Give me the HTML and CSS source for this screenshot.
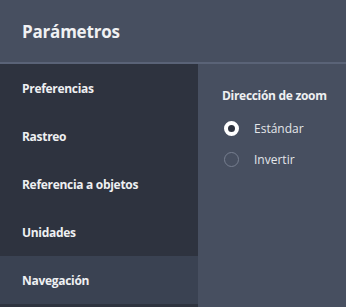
FILE: index.html
```html
<!DOCTYPE html>
<html lang="es">
<head>
<meta charset="utf-8">
<link rel="stylesheet" href="styles.css">
</head>
<body>
<div class="dialog">
  <header class="head"><h1 class="title">Parámetros</h1></header>
  <div class="main">
    <nav class="side">
      <div class="item">Preferencias</div>
      <div class="item">Rastreo</div>
      <div class="item">Referencia a objetos</div>
      <div class="item">Unidades</div>
      <div class="item active">Navegación</div>
    </nav>
    <section class="panel">
      <h2 class="label">Dirección de zoom</h2>
      <div class="opt"><span class="radio on"></span><span class="opt-text">Estándar</span></div>
      <div class="opt"><span class="radio"></span><span class="opt-text">Invertir</span></div>
    </section>
  </div>
</div>
</body>
</html>
```
FILE: styles.css
```css
html, body { margin: 0; padding: 0; }
body { background: #474f60; font-family: "Open Sans", "Noto Sans", sans-serif; color: #f2f2f2; }
.dialog { width: 346px; height: 307px; display: flex; flex-direction: column; overflow: hidden; }
.head { height: 62px; border-bottom: 2px solid #5a6377; background: #474f60; display: flex; align-items: center; padding-left: 22px; box-sizing: content-box; flex: none; }
.title { margin: 0; font-size: 17px; font-weight: 700; color: #f0f1f3; letter-spacing: -0.2px; }
.main { flex: 1; display: flex; }
.side { width: 198px; background: #2e333f; display: flex; flex-direction: column; flex: none; }
.item { height: 48px; display: flex; align-items: center; padding-left: 22px; font-size: 12px; font-weight: 700; color: #eef0f2; letter-spacing: -0.3px; }
.item.active { background: #3a4252; }
.panel { flex: 1; background: #474f60; padding: 24px 0 0 24px; }
.label { margin: 0 0 9px; font-size: 12px; font-weight: 700; color: #eef0f2; height: 16px; line-height: 16px; letter-spacing: -0.3px; }
.opt { height: 31px; display: flex; align-items: center; }
.radio { width: 15px; height: 15px; box-sizing: border-box; border-radius: 50%; border: 1px solid #777f90; margin-left: 2px; flex: none; }
.radio.on { border: 4px solid #ffffff; background: #2e333f; }
.opt-text { margin-left: 15px; font-size: 12px; color: #e4e6ea; }
```
